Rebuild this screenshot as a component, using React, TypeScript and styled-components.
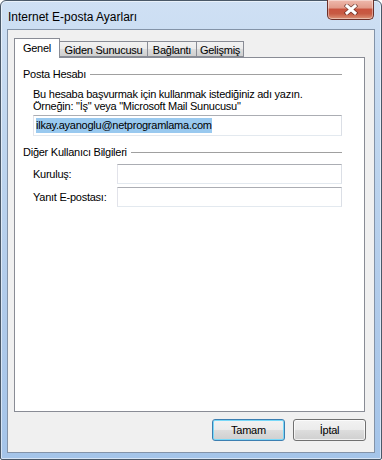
import styled, { createGlobalStyle } from "styled-components";

const GlobalStyle = createGlobalStyle`
    html, body {
        margin: 0;
        padding: 0;
        background: #ffffff;
    }
    body {
        font-family: "Liberation Sans", Arial, sans-serif;
        font-size: 11px;
        letter-spacing: -0.25px;
        color: #000;
    }
`;

const Window = styled.div`
    width: 382px;
    height: 460px;
    box-sizing: border-box;
    display: flex;
    flex-direction: column;
    padding: 0 6px 6px 6px;
    border: 1px solid #4a5868;
    border-radius: 6px 6px 2px 2px;
    background: linear-gradient(to bottom, #cfe0f4 0%, #bfd6ef 30%, #afcaea 70%, #a4c4e9 100%);
    box-shadow: inset 0 0 0 1px rgba(255, 255, 255, 0.55);
`;

const TitleBar = styled.div`
    height: 28px;
    display: flex;
    align-items: flex-start;
`;

const Title = styled.div`
    margin-top: 9px;
    padding-left: 1px;
    font-size: 12px;
    letter-spacing: 0;
    line-height: 14px;
`;

const CloseButton = styled.div`
    margin-left: auto;
    margin-top: -1px;
    margin-right: 1px;
    width: 47px;
    height: 20px;
    box-sizing: border-box;
    display: flex;
    align-items: center;
    justify-content: center;
    border: 1px solid #6b3029;
    border-top: none;
    border-radius: 0 0 5px 5px;
    background: linear-gradient(to bottom, #efb9ad 0%, #e29c8b 40%, #c9543f 50%, #c75a43 72%, #dc9478 100%);
    box-shadow: inset 0 0 0 1px rgba(255, 255, 255, 0.4);
`;

const Client = styled.div`
    flex: 1;
    display: flex;
    flex-direction: column;
    padding: 8px 8px 11px 6px;
    background: #f0f0f0;
    border: 1px solid #8393a8;
`;

const TabRow = styled.div`
    height: 19px;
    display: flex;
    align-items: flex-end;
`;

const Tab = styled.div<{ $w: number; $active?: boolean }>`
    box-sizing: border-box;
    width: ${(p) => p.$w}px;
    height: ${(p) => (p.$active ? 20 : 16)}px;
    margin-left: ${(p) => (p.$active ? 0 : -1)}px;
    margin-bottom: ${(p) => (p.$active ? -1 : 0)}px;
    position: relative;
    z-index: ${(p) => (p.$active ? 2 : 0)};
    border: 1px solid #898c95;
    border-bottom: ${(p) => (p.$active ? "none" : "1px solid #898c95")};
    background: ${(p) => (p.$active ? "#ffffff" : "linear-gradient(to bottom, #f2f2f2 0%, #ebebeb 50%, #dddddd 51%, #cfcfcf 100%)")};
    padding-top: ${(p) => (p.$active ? 3 : 2)}px;
    text-align: center;
    line-height: 13px;
    white-space: nowrap;

    &:first-child {
        margin-left: 0;
    }
`;

const Panel = styled.div`
    flex: 1;
    margin-right: 1px;
    position: relative;
    z-index: 1;
    background: #ffffff;
    border: 1px solid #898c95;
    padding: 10px 22px 0 8px;
`;

const GroupHeader = styled.div<{ $gap: number }>`
    display: flex;
    align-items: center;
    margin-top: ${(p) => p.$gap}px;
    line-height: 13px;

    &::after {
        content: "";
        flex: 1;
        height: 1px;
        margin-left: 4px;
        margin-top: -1px;
        background: #a0a0a0;
    }
`;

const Section = styled.div`
    padding-left: 10px;
`;

const Description = styled.p`
    margin: 7px 0 0 0;
    line-height: 12px;
`;

const TextField = styled.div<{ $h: number }>`
    box-sizing: border-box;
    flex: 1;
    height: ${(p) => p.$h}px;
    display: flex;
    align-items: center;
    padding-left: 2px;
    border: 1px solid #abadb3;
    border-left-color: #e2e3ea;
    border-right-color: #dbdfe6;
    border-bottom-color: #e3e9ef;
    background: #fff;
    white-space: nowrap;
    overflow: hidden;
`;

const Selected = styled.span`
    background: #99c9ef;
    line-height: 15px;
`;

const FieldRow = styled.div<{ $gap: number }>`
    display: flex;
    align-items: center;
    margin-top: ${(p) => p.$gap}px;
`;

const FieldLabel = styled.div`
    width: 84px;
    flex-shrink: 0;
`;

const ButtonBar = styled.div`
    display: flex;
    justify-content: flex-end;
    gap: 8px;
    margin-top: 7px;
`;

const Button = styled.button<{ $default?: boolean }>`
    width: 73px;
    height: 22px;
    box-sizing: border-box;
    padding: 0;
    font-family: "Liberation Sans", Arial, sans-serif;
    font-size: 11px;
    letter-spacing: -0.25px;
    color: #000;
    border: 1px solid ${(p) => (p.$default ? "#3c7fb1" : "#707070")};
    border-radius: 3px;
    background: linear-gradient(to bottom, #f2f2f2 0%, #ebebeb 50%, #dddddd 51%, #cfcfcf 100%);
    box-shadow: inset 0 0 0 1px ${(p) => (p.$default ? "#78d8f8" : "rgba(255,255,255,0.7)")};
`;

const CloseGlyph = () => (
    <svg width="14" height="11" viewBox="0 0 14 11">
        <path d="M3 2 L11 9 M11 2 L3 9" stroke="rgba(70,25,20,0.7)" strokeWidth="4.4" strokeLinecap="square" />
        <path d="M3 2 L11 9 M11 2 L3 9" stroke="#ffffff" strokeWidth="3" strokeLinecap="square" />
    </svg>
);

const tabs = [
    { label: "Genel", w: 46, active: true },
    { label: "Giden Sunucusu", w: 89 },
    { label: "Bağlantı", w: 50 },
    { label: "Gelişmiş", w: 48 },
];

const App = () => {
    return (
        <>
            <GlobalStyle />
            <Window>
                <TitleBar>
                    <Title>Internet E-posta Ayarları</Title>
                    <CloseButton>
                        <CloseGlyph />
                    </CloseButton>
                </TitleBar>
                <Client>
                    <TabRow>
                        {tabs.map((t) => (
                            <Tab key={t.label} $w={t.w} $active={t.active}>
                                {t.label}
                            </Tab>
                        ))}
                    </TabRow>
                    <Panel>
                        <GroupHeader $gap={0}>Posta Hesabı</GroupHeader>
                        <Section>
                            <Description>
                                Bu hesaba başvurmak için kullanmak istediğiniz adı yazın.
                                <br />
                                Örneğin: "İş" veya "Microsoft Mail Sunucusu"
                            </Description>
                            <FieldRow $gap={3}>
                                <TextField $h={21}>
                                    <Selected>ilkay.ayanoglu@netprogramlama.com</Selected>
                                </TextField>
                            </FieldRow>
                        </Section>
                        <GroupHeader $gap={10}>Diğer Kullanıcı Bilgileri</GroupHeader>
                        <Section>
                            <FieldRow $gap={5}>
                                <FieldLabel>Kuruluş:</FieldLabel>
                                <TextField $h={20} />
                            </FieldRow>
                            <FieldRow $gap={3}>
                                <FieldLabel>Yanıt E-postası:</FieldLabel>
                                <TextField $h={20} />
                            </FieldRow>
                        </Section>
                    </Panel>
                    <ButtonBar>
                        <Button $default>Tamam</Button>
                        <Button>İptal</Button>
                    </ButtonBar>
                </Client>
            </Window>
        </>
    );
};

export default App;
